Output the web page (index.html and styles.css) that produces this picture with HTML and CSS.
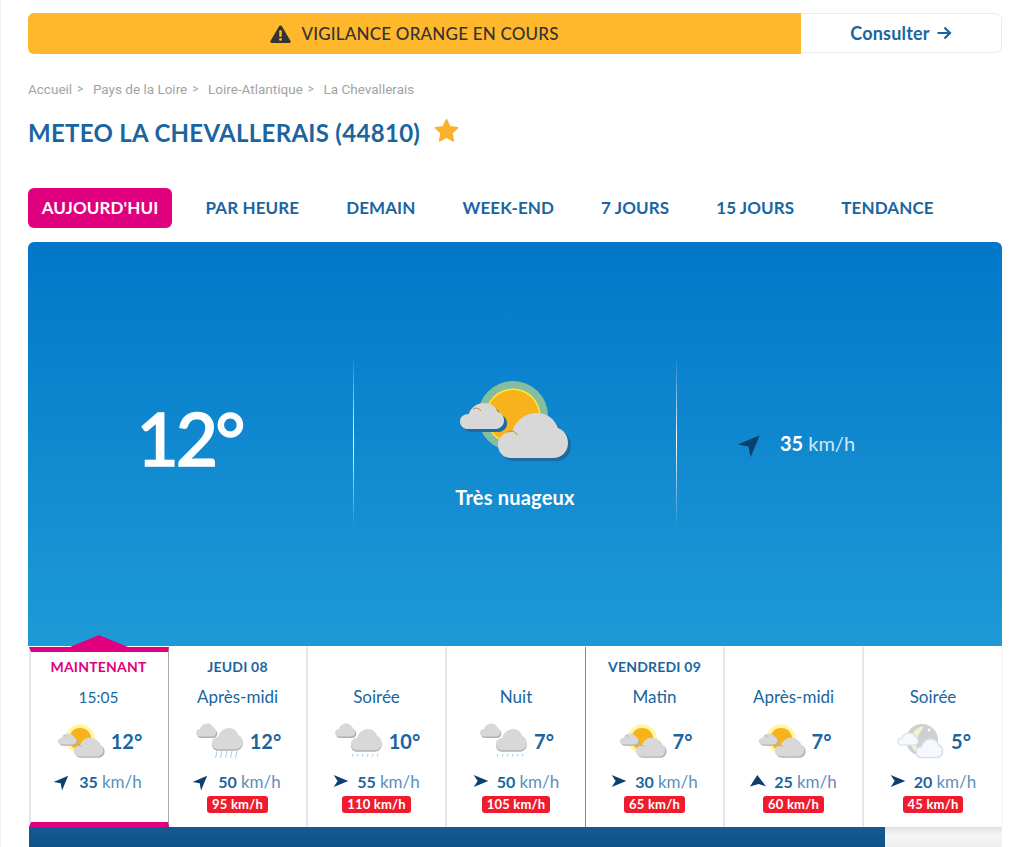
FILE: index.html
```html
<!DOCTYPE html>
<html lang="fr">
<head>
<meta charset="utf-8">
<title>Météo La Chevallerais</title>
<link rel="stylesheet" href="styles.css">
</head>
<body>
<svg class="defs" width="0" height="0" aria-hidden="true">
  <defs>
    <path id="cloud" d="M13 45C5 45 0 39 0 32C0 24 6 19 14 19C17 8 27 0 39 0C50 0 57 7 60 15C66 17 70 23 70 30C70 39 63 45 55 45Z"/>
    <symbol id="wx-sun" viewBox="0 0 114 84">
      <circle class="halo" cx="55" cy="37" r="35"/>
      <circle class="rim" cx="55" cy="37" r="27.5"/>
      <circle class="sun" cx="55" cy="37" r="26"/>
      <use class="shade" href="#cloud" transform="translate(5 27) scale(.63 .58)"/>
      <use class="shade" href="#cloud" transform="translate(43 37)"/>
      <use class="puff" href="#cloud" transform="translate(2 24) scale(.63 .58)"/>
      <use class="puff" href="#cloud" transform="translate(40 34)"/>
      <path class="arc" d="M15 30c3-1.500 6-1 8 2M50 53c3-2 7-1 9 3"/>
    </symbol>
    <symbol id="wx-drizzle" viewBox="0 0 48 36">
      <use class="shade" href="#cloud" transform="translate(1 2) scale(.29 .29)"/>
      <use class="puff" href="#cloud" transform="translate(0 .5) scale(.29 .29)"/>
      <use class="shade" href="#cloud" transform="translate(16 7.500) scale(.44 .47)"/>
      <use class="puff" href="#cloud" transform="translate(16 6) scale(.44 .47)"/>
      <path class="drop" d="M18 31l-.6 2.500M23 31l-.6 2.500M28 31l-.6 2.500M33 31l-.6 2.500M38 31l-.6 2.500M43 31l-.6 2.500"/>
    </symbol>
    <symbol id="wx-rain" viewBox="0 0 48 36">
      <use class="shade" href="#cloud" transform="translate(1 2) scale(.29 .29)"/>
      <use class="puff" href="#cloud" transform="translate(0 .5) scale(.29 .29)"/>
      <use class="shade" href="#cloud" transform="translate(16 6.500) scale(.44 .47)"/>
      <use class="puff" href="#cloud" transform="translate(16 5) scale(.44 .47)"/>
      <path class="drop" d="M21 28l-1.500 7M26 28l-1.500 7M31 28l-1.500 7M36 28l-1.500 7M41 28l-1.500 7"/>
    </symbol>
    <symbol id="wx-night" viewBox="0 0 48 36">
      <circle class="disc" cx="25" cy="17" r="16"/>
      <path class="crescent" d="M26 3A15 15 0 0 0 20 30C22 31 17 20 21 13C23 9 27 5 26 3Z"/>
      <circle class="star" cx="32" cy="7" r="1.400"/>
      <use class="ghost" href="#cloud" transform="translate(1 10) scale(.29 .27)"/>
      <use class="ghost" href="#cloud" transform="translate(19 16) scale(.38 .41)"/>
    </symbol>
    <symbol id="arrow" viewBox="0 0 24 24">
      <path d="M23 12L1 3L7 12L1 21Z"/>
    </symbol>
    <symbol id="arrow-wide" viewBox="0 0 46 35">
      <path d="M21 0L46 33L25 26L0 33Z"/>
    </symbol>
  </defs>
</svg>

<main class="page">
  <section class="alert">
    <div class="alert-main">
      <svg class="alert-icon" viewBox="0 0 22 19"><path d="M11 0.500c.7 0 1.300.4 1.600 1l9 15.300c.6 1-.2 2.200-1.300 2.200H1.700C.6 19-.2 17.800.4 16.800l9-15.300c.3-.6.900-1 1.600-1z"/><rect class="mark" x="9.700" y="5.500" width="2.600" height="7" rx="1"/><circle class="mark" cx="11" cy="15.200" r="1.500"/></svg>
      <span>VIGILANCE ORANGE EN COURS</span>
    </div>
    <a class="alert-link">Consulter
      <svg class="link-arrow" viewBox="0 0 16 14"><path d="M1.500 7H14M8.500 1.500L14 7L8.500 12.500"/></svg>
    </a>
  </section>

  <nav class="crumbs">
    <span>Accueil</span><i>&gt;</i><span>Pays de la Loire</span><i>&gt;</i><span>Loire-Atlantique</span><i>&gt;</i><span>La Chevallerais</span>
  </nav>

  <header class="heading">
    <h1>METEO LA CHEVALLERAIS (44810)</h1>
    <svg class="fav" viewBox="0 0 24 24"><path d="M12 2.500l2.900 6.300 6.800.8-5 4.700 1.300 6.800-6-3.400-6 3.400 1.300-6.800-5-4.700 6.800-.8z"/></svg>
  </header>

  <nav class="tabs">
    <a class="tab tab-on">AUJOURD'HUI</a>
    <a class="tab">PAR HEURE</a>
    <a class="tab">DEMAIN</a>
    <a class="tab">WEEK-END</a>
    <a class="tab">7 JOURS</a>
    <a class="tab">15 JOURS</a>
    <a class="tab">TENDANCE</a>
  </nav>

  <section class="hero">
    <div class="hero-col">
      <div class="hero-temp">12°</div>
    </div>
    <div class="hero-col hero-mid">
      <svg class="hero-icon wx-hero"><use href="#wx-sun"/></svg>
      <div class="hero-label">Très nuageux</div>
    </div>
    <div class="hero-col">
      <div class="hero-wind">
        <svg class="hero-arrow dir-ne"><use href="#arrow"/></svg>
        <span><b>35</b> km/h</span>
      </div>
    </div>
  </section>

  <section class="strip">
    <article class="slot slot-now">
      <h2>MAINTENANT</h2>
      <p class="when when-time">15:05</p>
      <div class="now"><svg class="wx wx-day"><use href="#wx-sun"/></svg><strong>12°</strong></div>
      <div class="wind"><svg class="wind-arrow dir-ne"><use href="#arrow"/></svg><b>35</b><span>km/h</span></div>
    </article>
    <article class="slot">
      <h2>JEUDI 08</h2>
      <p class="when">Après-midi</p>
      <div class="now"><svg class="wx wx-day"><use href="#wx-rain"/></svg><strong>12°</strong></div>
      <div class="wind"><svg class="wind-arrow dir-ne"><use href="#arrow"/></svg><b>50</b><span>km/h</span></div>
      <div class="gust">95 km/h</div>
    </article>
    <article class="slot">
      <h2></h2>
      <p class="when">Soirée</p>
      <div class="now"><svg class="wx wx-day"><use href="#wx-drizzle"/></svg><strong>10°</strong></div>
      <div class="wind"><svg class="wind-arrow"><use href="#arrow"/></svg><b>55</b><span>km/h</span></div>
      <div class="gust">110 km/h</div>
    </article>
    <article class="slot slot-endday">
      <h2></h2>
      <p class="when">Nuit</p>
      <div class="now"><svg class="wx wx-day"><use href="#wx-drizzle"/></svg><strong>7°</strong></div>
      <div class="wind"><svg class="wind-arrow"><use href="#arrow"/></svg><b>50</b><span>km/h</span></div>
      <div class="gust">105 km/h</div>
    </article>
    <article class="slot">
      <h2>VENDREDI 09</h2>
      <p class="when">Matin</p>
      <div class="now"><svg class="wx wx-day"><use href="#wx-sun"/></svg><strong>7°</strong></div>
      <div class="wind"><svg class="wind-arrow"><use href="#arrow"/></svg><b>30</b><span>km/h</span></div>
      <div class="gust">65 km/h</div>
    </article>
    <article class="slot">
      <h2></h2>
      <p class="when">Après-midi</p>
      <div class="now"><svg class="wx wx-day"><use href="#wx-sun"/></svg><strong>7°</strong></div>
      <div class="wind"><svg class="wind-arrow"><use href="#arrow-wide"/></svg><b>25</b><span>km/h</span></div>
      <div class="gust">60 km/h</div>
    </article>
    <article class="slot">
      <h2></h2>
      <p class="when">Soirée</p>
      <div class="now"><svg class="wx wx-day"><use href="#wx-night"/></svg><strong>5°</strong></div>
      <div class="wind"><svg class="wind-arrow"><use href="#arrow"/></svg><b>20</b><span>km/h</span></div>
      <div class="gust">45 km/h</div>
    </article>
  </section>

  <div class="foot">
    <div class="foot-blue"></div>
    <div class="foot-grey"></div>
  </div>
</main>
</body>
</html>
```

FILE: styles.css
```css
* { box-sizing: border-box; }

html, body {
  margin: 0;
  height: 847px;
  overflow: hidden;
  background: #fff;
}

body {
  font-family: "Lato", "Noto Sans", sans-serif;
  color: #1a65a0;
  border-left: 1px solid #f3f3f3;
}

.defs { position: absolute; }

.page {
  padding: 13px 22px 0 27px;
}

/* alert */
.alert {
  display: flex;
  height: 41px;
}

.alert-main {
  width: 773px;
  background: #ffb72c;
  border-radius: 6px 0 0 6px;
  display: flex;
  align-items: center;
  justify-content: center;
  gap: 10px;
  font-size: 17px;
  font-weight: 500;
  letter-spacing: .2px;
  color: #333;
}

.alert-icon { width: 21px; height: 18px; fill: #333; }
.alert-icon .mark { fill: #ffb72c; }

.alert-link {
  flex: 1;
  height: 40px;
  border: 1px solid #ececf0;
  border-left: 0;
  border-radius: 0 6px 6px 0;
  display: flex;
  align-items: center;
  justify-content: center;
  gap: 6px;
  font-size: 18px;
  font-weight: 700;
  letter-spacing: .2px;
}

.link-arrow {
  width: 16px;
  height: 14px;
  fill: none;
  stroke: #1a65a0;
  stroke-width: 2.200;
}

/* breadcrumb */
.crumbs {
  margin-top: 26px;
  height: 18px;
  line-height: 18px;
  font-family: "Roboto", sans-serif;
  font-size: 13.500px;
  color: #a3a3a3;
  display: flex;
  gap: 5px;
}

.crumbs i { font-style: normal; margin-right: 4.500px; font-size: 12px; }

/* title */
.heading {
  margin-top: 17px;
  height: 36px;
  display: flex;
  align-items: center;
}

.heading h1 {
  margin: 0;
  font-size: 24px;
  font-weight: 700;
  letter-spacing: .3px;
  line-height: 36px;
}

.fav {
  width: 27px;
  height: 27px;
  margin: 0 0 6px 12.500px;
  fill: #fbb02c;
  stroke: #fbb02c;
  stroke-width: 1.500;
  stroke-linejoin: round;
}

/* tabs */
.tabs {
  margin-top: 37px;
  display: flex;
  height: 40px;
  align-items: center;
}

.tab {
  font-size: 17px;
  font-weight: 700;
  letter-spacing: .1px;
  padding: 0 23.500px 2px;
  white-space: nowrap;
}

.tab-on {
  height: 40px;
  line-height: 39px;
  width: 144px;
  padding: 0;
  text-align: center;
  border-radius: 6px;
  margin-right: 10px;
  background: #e0007f;
  color: #fff;
}

/* hero */
.hero {
  margin-top: 14px;
  height: 404px;
  border-radius: 6px 6px 0 0;
  background: linear-gradient(180deg, #0277c9 0%, #1e9ad6 100%);
  padding-top: 113px;
  display: grid;
  grid-template-columns: 325px 324px 325px;
  align-items: start;
  color: #fff;
}

.hero-col {
  height: 172px;
  display: flex;
  flex-direction: column;
  align-items: center;
  justify-content: center;
}

.hero-mid {
  background:
    linear-gradient(180deg, rgba(255, 255, 255, 0), #fff 50%, rgba(255, 255, 255, 0)) left top / 1px 100% no-repeat,
    linear-gradient(180deg, rgba(255, 255, 255, 0), #fff 50%, rgba(255, 255, 255, 0)) right top / 1px 100% no-repeat;
  justify-content: flex-start;
  padding-top: 24px;
}

.hero-temp {
  font-size: 73px;
  line-height: 70px;
  font-weight: 500;
  letter-spacing: -3px;
  -webkit-text-stroke: 1.400px #fff;
  margin: 0 0 6px -2px;
}

.hero-icon {
  width: 114px;
  height: 84px;
}

.hero-label {
  margin-top: 21px;
  font-size: 20px;
  letter-spacing: .2px;
  font-weight: 700;
  line-height: 26px;
}

.hero-wind {
  display: flex;
  align-items: center;
  gap: 16px;
  font-size: 20px;
  margin-right: 84px;
  padding-top: 4px;
}

.hero-wind span { color: #d3e8f7; }
.hero-wind b { color: #fff; }
.hero-wind svg { fill: #0c3f6f; }

.hero-arrow {
  width: 24px;
  height: 24px;
}

/* direction variants */
.dir-ne { transform: rotate(-45deg); }

/* icon palettes */
.wx-hero {
  --halo: #86bd9f;
  --rim: #ffe83a;
  --shade: #1c6ca3;
  --puff: #d8d8d8;
  --arc: #b98a2a;
}

.wx-day {
  --halo: #fff6a8;
  --rim: #fff07a;
  --shade: #b0b0b0;
  --puff: #d8d8d8;
  --arc: #a98a3a;
}

.halo { fill: var(--halo); }
.rim { fill: var(--rim); }
.sun { fill: #f8b31c; }
.shade { fill: var(--shade); }
.puff { fill: var(--puff); }
.arc { fill: none; stroke: var(--arc); stroke-width: 1; }
.drop { fill: none; stroke: #9ad3f2; stroke-width: 1; }
.disc { fill: #cfcfd2; }
.crescent { fill: #f4f0cc; }
.star { fill: #fff; }
.ghost { fill: #f6f8fb; stroke: #d3e1ee; stroke-width: 4; }

/* forecast strip */
.strip {
  display: grid;
  grid-template-columns: repeat(6, 139px) 1fr;
  height: 180px;
  margin-top: 1px;
  margin-left: 2px;
  width: 972px;
  box-shadow: 1px 0 0 #f3f3f3;
}

.slot {
  position: relative;
  border-right: 2px solid #e3e6ec;
  display: flex;
  flex-direction: column;
  align-items: center;
  padding-top: 11px;
}

.slot:last-child { border-right: 0; }
.slot-endday { border-right: 1px solid #5f93bd; }

.slot-now {
  border-left: 2px solid #e3e6ec;
  border-right: 1px solid #a9a9a9;
  border-top: 5px solid #e0007f;
  border-bottom: 5px solid #e0007f;
  padding: 6px 2px 0 0;
  width: 140px;
  margin-left: -1px;
}

.slot-now::before {
  content: "";
  position: absolute;
  left: 39px;
  top: -17px;
  width: 58px;
  height: 12px;
  background: #e0007f;
  clip-path: polygon(50% 0, 100% 100%, 0 100%);
}

.slot h2 {
  margin: 0;
  height: 18px;
  line-height: 18px;
  font-size: 14px;
  letter-spacing: .2px;
  font-weight: 700;
}

.slot-now h2 { color: #e0007f; }

.when {
  margin: 11px 0 0;
  height: 20px;
  line-height: 20px;
  font-size: 17px;
}

.when-time { font-size: 15.500px; }

.now {
  margin-top: 14px;
  padding-left: 2px;
  height: 40px;
  display: flex;
  align-items: center;
  gap: 6px;
}

.wx {
  width: 48px;
  height: 36px;
}

.now strong {
  font-size: 20px;
  font-weight: 700;
}

.wind {
  margin-top: 9px;
  height: 22px;
  display: flex;
  align-items: center;
  font-size: 16px;
}

.wind-arrow {
  width: 16px;
  height: 16px;
  margin-right: 8px;
  fill: #0c3f6f;
}

.wind b { font-weight: 700; }

.wind span {
  margin-left: 4px;
  font-size: 17px;
  color: #5c90ba;
}

.gust {
  margin-top: 4px;
  height: 17px;
  line-height: 17px;
  padding: 0 5px;
  border-radius: 3px;
  background: #ef1c2e;
  color: #fff;
  font-size: 13px;
  letter-spacing: .2px;
  font-weight: 700;
}

/* bottom */
.foot {
  display: flex;
  height: 21px;
  margin-left: 1px;
  width: 973px;
}

.foot-blue {
  width: 856px;
  background: linear-gradient(180deg, #135a94 0%, #0f5288 100%);
}

.foot-grey {
  flex: 1;
  background: linear-gradient(180deg, #e0e0e0 0%, #f6f6f6 40%, #eeeeee 100%);
}
```
